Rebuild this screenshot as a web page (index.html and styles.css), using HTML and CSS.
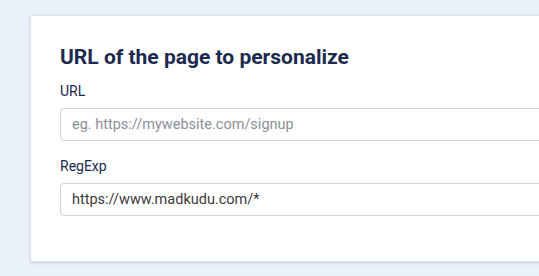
FILE: index.html
```html
<!DOCTYPE html>
<html>
<head>
<meta charset="utf-8">
<link rel="stylesheet" href="styles.css">
</head>
<body>
<div class="page">
  <section class="card">
    <h2 class="card-title">URL of the page to personalize</h2>
    <div class="field">
      <label class="field-label" for="url">URL</label>
      <input class="field-input" id="url" type="text" placeholder="eg. https://mywebsite.com/signup">
    </div>
    <div class="field">
      <label class="field-label" for="regexp">RegExp</label>
      <input class="field-input" id="regexp" type="text" value="https://www.madkudu.com/*">
    </div>
  </section>
</div>
</body>
</html>
```
FILE: styles.css
```css
html, body {
  margin: 0;
  padding: 0;
  background: #eaf1fa;
}
.page {
  width: 539px;
  height: 276px;
  overflow: hidden;
  padding: 15px 0 0 30px;
  box-sizing: border-box;
  font-family: "Roboto", "Liberation Sans", sans-serif;
}
.card {
  width: 640px;
  background: #ffffff;
  border: 1px solid #dfe3e8;
  border-radius: 3px;
  box-shadow: 0 1px 3px rgba(40, 50, 70, 0.18);
  padding: 29px 29px 45px 29px;
  box-sizing: border-box;
  display: flex;
  flex-direction: column;
}
.card-title {
  margin: 0 0 12px 0;
  font-size: 21px;
  line-height: 24px;
  font-weight: 700;
  color: #1b2a4e;
}
.field {
  display: flex;
  flex-direction: column;
  gap: 7px;
}
.field + .field {
  margin-top: 15px;
}
.field-label {
  font-size: 14px;
  line-height: 20px;
  color: #1b2a4e;
}
.field-input {
  height: 33px;
  box-sizing: border-box;
  border: 1px solid #cfd4da;
  border-radius: 4px;
  padding: 0 11px;
  font-family: inherit;
  font-size: 14.5px;
  color: #3a3a3a;
  background: #fff;
  outline: none;
}
.field-input::placeholder {
  color: #8b9099;
  opacity: 1;
}
```
